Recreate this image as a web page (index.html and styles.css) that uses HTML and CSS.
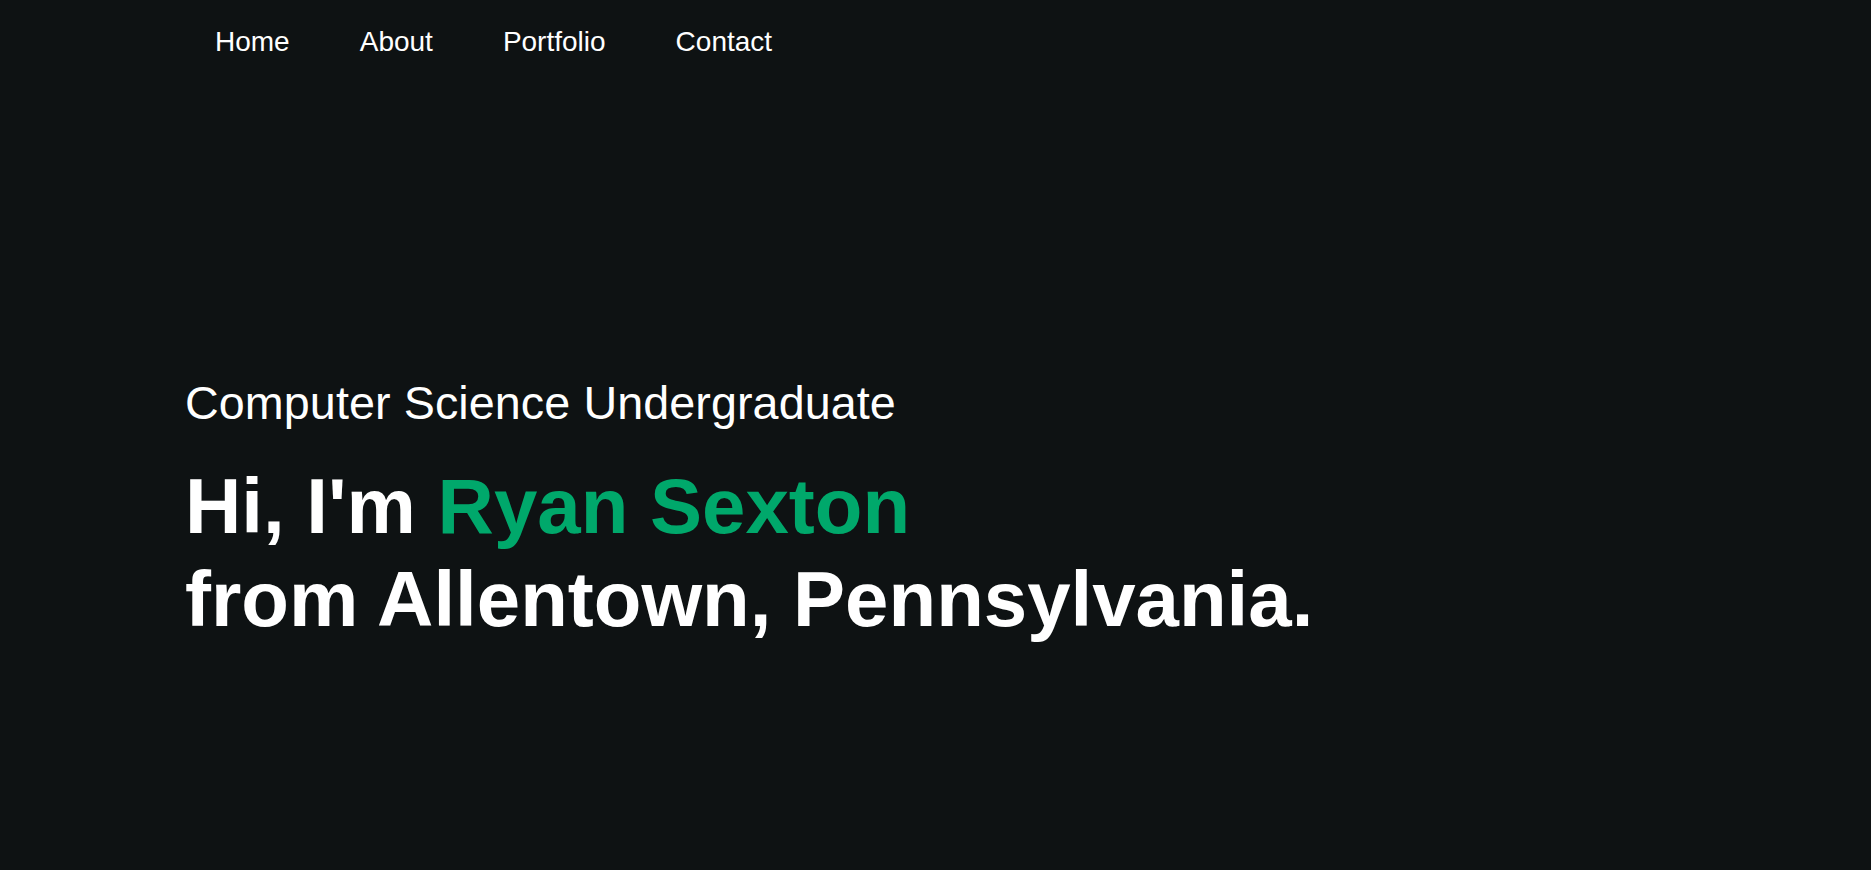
FILE: index.html
```html
<!DOCTYPE html>
<html lang="en">
<head>
<meta charset="utf-8">
<title>Ryan Sexton</title>
<link rel="stylesheet" href="styles.css">
</head>
<body>
<header class="site-header">
  <nav class="nav">
    <a class="nav-link" href="#home">Home</a>
    <a class="nav-link" href="#about">About</a>
    <a class="nav-link" href="#portfolio">Portfolio</a>
    <a class="nav-link" href="#contact">Contact</a>
  </nav>
</header>
<main class="hero">
  <p class="hero-sub">Computer Science Undergraduate</p>
  <h1 class="hero-title">Hi, I'm <span class="accent">Ryan Sexton</span><br>from Allentown, Pennsylvania.</h1>
</main>
</body>
</html>
```
FILE: styles.css
```css
html, body {
  margin: 0;
  padding: 0;
  background: #0e1213;
  height: 100%;
}
body {
  font-family: "Liberation Sans", Arial, sans-serif;
  color: #ffffff;
}
.site-header {
  padding: 26px 0 0 180px;
}
.nav {
  display: flex;
}
.nav-link {
  display: block;
  padding: 0 35px;
  font-size: 28px;
  color: #ffffff;
  text-decoration: none;
}
.hero {
  padding: 318px 0 0 185px;
}
.hero-sub {
  margin: 0;
  font-size: 46.7px;
  letter-spacing: 0.08px;
  font-weight: 400;
}
.hero-title {
  margin: 30px 0 0 0;
  font-size: 78px;
  line-height: 93px;
  font-weight: 700;
}
.accent {
  color: #00a86b;
}
```
